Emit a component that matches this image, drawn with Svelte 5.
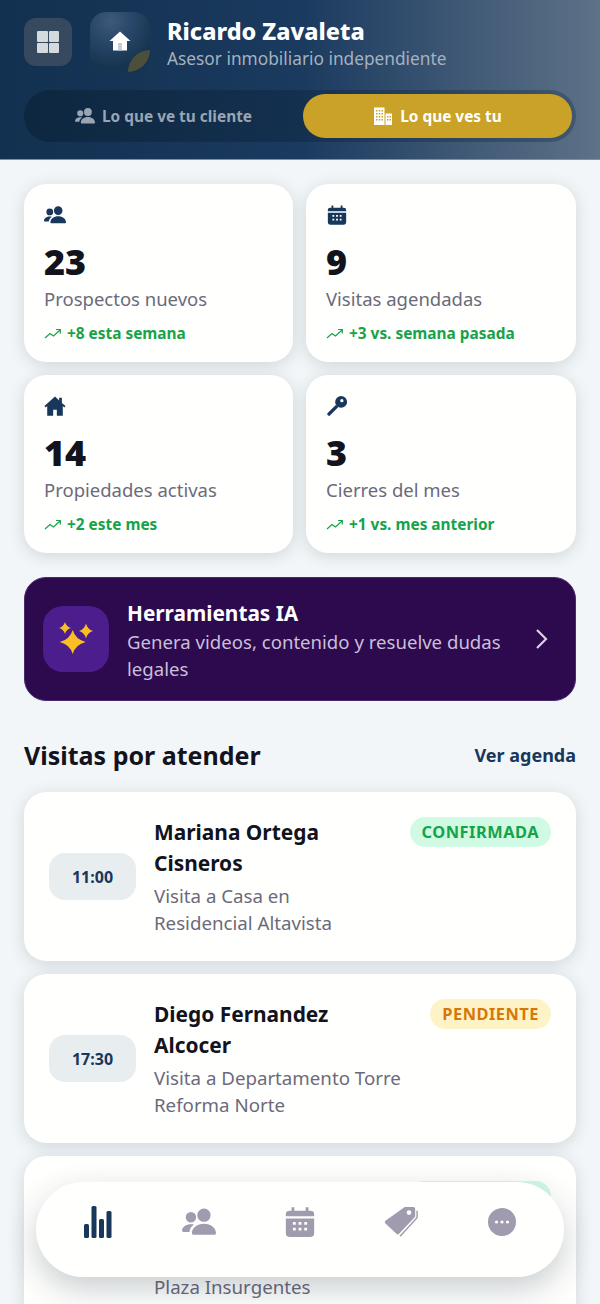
<script lang="ts">
	const people = 'M15.500 2.500a4.700 4.700 0 1 1 0 9.400 4.700 4.700 0 0 1 0-9.400zM6.300 5a3.700 3.700 0 1 1 0 7.400 3.700 3.700 0 0 1 0-7.400zM15.500 13.300c4.800 0 8.300 2.800 8.500 6.500.0.700-.4 1.200-1.100 1.200H8.100c-.7 0-1.100-.5-1.100-1.200.2-3.700 3.700-6.500 8.500-6.500zM6.300 13.500c.8 0 1.500.1 2.200.3-1.900 1.300-3.100 3.200-3.300 5.200H1c-.7 0-1-.5-1-1.100.2-2.500 2.800-4.400 6.300-4.400z';

	const stats = [
		{ icon: 'people', value: '23', label: 'Prospectos nuevos', trend: '+8 esta semana' },
		{ icon: 'calendar', value: '9', label: 'Visitas agendadas', trend: '+3 vs. semana pasada' },
		{ icon: 'home', value: '14', label: 'Propiedades activas', trend: '+2 este mes' },
		{ icon: 'key', value: '3', label: 'Cierres del mes', trend: '+1 vs. mes anterior' }
	];

	const visits = [
		{ time: '11:00', name: 'Mariana Ortega Cisneros', place: 'Visita a Casa en Residencial Altavista', status: 'CONFIRMADA', kind: 'ok' },
		{ time: '17:30', name: 'Diego Fernandez Alcocer', place: 'Visita a Departamento Torre Reforma Norte', status: 'PENDIENTE', kind: 'wait' },
		{ time: '19:00', name: 'Alejandra Mendoza Rivas', place: 'Visita a Oficina Corporativa Plaza Insurgentes', status: 'CONFIRMADA', kind: 'ok' }
	];
</script>

{#snippet calendar()}
	<path fill-rule="evenodd" d="M6 1.500h2V4h8V1.500h2V4h1.500A2.500 2.500 0 0 1 22 6.500V8H2V6.500A2.500 2.500 0 0 1 4.500 4H6zM2 9.500h20V20a2.500 2.500 0 0 1-2.500 2.500h-15A2.500 2.500 0 0 1 2 20zM7 12v2h2v-2zm4 0v2h2v-2zm4 0v2h2v-2zm-8 4v2h2v-2zm4 0v2h2v-2zm4 0v2h2v-2z" />
{/snippet}

<header class="top">
	<div class="brand-row">
		<button class="menu" aria-label="Menu">
			<span></span><span></span><span></span><span></span>
		</button>
		<div class="logo">
			<svg class="logo-house" viewBox="0 0 24 24" aria-hidden="true">
				<path fill="#fff" d="M12 2.500 1.500 12H5v9.500h14V12h3.500z" />
				<rect x="10" y="14" width="4" height="7.500" fill="#c6ccd2" />
			</svg>
			<span class="leaf"></span>
		</div>
		<div class="who">
			<h1>Ricardo Zavaleta</h1>
			<p>Asesor inmobiliario independiente</p>
		</div>
	</div>
	<div class="switch">
		<button class="seg client">
			<svg width="20" height="20" viewBox="0 0 24 24" fill="currentColor" aria-hidden="true"><path d={people} /></svg>
			Lo que ve tu cliente
		</button>
		<button class="seg active">
			<svg width="20" height="20" viewBox="0 0 20 20" aria-hidden="true">
				<path fill="#fff" fill-rule="evenodd" d="M1 1.500h10.500V19H1zM3 4v1.500h1.500V4zm2.800 0v1.500h1.500V4zM8.500 4v1.500H10V4zM3 7v1.500h1.500V7zm2.800 0v1.500h1.500V7zM8.500 7v1.500H10V7zM3 10v1.500h1.500V10zm2.800 0v1.500h1.500V10zM8.500 10v1.500H10V10zM3 13v1.500h1.500V13zm2.800 0v1.500h1.500V13zM8.500 13v1.500H10V13zM12.500 7.500H19V19h-6.500zM14 10v1.500h1.500V10zm2.500 0v1.500H18V10zM14 13v1.500h1.500V13zm2.500 0v1.500H18V13z" />
			</svg>
			Lo que ves tu
		</button>
	</div>
</header>

<main>
	<section class="stats">
		{#each stats as s}
			<article class="stat">
				<svg class="stat-icon" viewBox="0 0 24 24" fill="#17375b" aria-hidden="true">
					{#if s.icon === 'people'}
						<path d={people} />
					{:else if s.icon === 'calendar'}
						{@render calendar()}
					{:else if s.icon === 'home'}
						<path d="M12 1.500 0.500 12l1.400 1.500L3.500 12v10.500H10V16h4v6.500h6.500V12l1.600 1.500 1.400-1.500L19.500 8.800V3h-3v3z" />
					{:else}
						<path fill-rule="evenodd" d="M16.500 1a6.500 6.500 0 1 1 0 13 6.500 6.500 0 0 1 0-13zm.8 3.400a1.800 1.800 0 1 0 0 3.600 1.800 1.800 0 0 0 0-3.600z" />
						<path d="M11 10.500 13.500 13l-9 9.200a1.500 1.500 0 0 1-2.200 0l-.5-.5a1.500 1.500 0 0 1 0-2.200z" />
					{/if}
				</svg>
				<div class="value">{s.value}</div>
				<div class="label">{s.label}</div>
				<div class="trend">
					<svg width="18" height="18" viewBox="0 0 18 18" fill="none" stroke="currentColor" stroke-width="1.200" aria-hidden="true"><path d="M1 13 6 8.500 9.500 11 16 5M12 4.500h4.300V8.500" /></svg>
					{s.trend}
				</div>
			</article>
		{/each}
	</section>

	<section class="ai">
		<div class="ai-icon">
			<svg width="36" height="36" viewBox="0 0 36 36" fill="#fbbf24" aria-hidden="true">
				<path d="M14.700 9Q17.500 18.500 27.700 21 17.500 23.500 14.700 33 11.900 23.500 1.700 21 11.900 18.500 14.700 9z" />
				<path d="M7 1Q8.300 5.700 13 7 8.300 8.300 7 13 5.700 8.300 1 7 5.700 5.700 7 1z" />
				<path d="M28 2.500Q29.500 8.500 35 10 29.500 11.500 28 17.500 26.500 11.500 21 10 26.500 8.500 28 2.500z" />
			</svg>
		</div>
		<div class="ai-text">
			<h2>Herramientas IA</h2>
			<p>Genera videos, contenido y resuelve dudas legales</p>
		</div>
		<svg class="chev" width="14" height="22" viewBox="0 0 14 22" fill="none" stroke="#d9d2e4" stroke-width="2.200" aria-hidden="true"><path d="m2 2 9 9-9 9" /></svg>
	</section>

	<div class="section-head">
		<h2>Visitas por atender</h2>
		<span>Ver agenda</span>
	</div>

	<section class="visits">
		{#each visits as v}
			<article class="visit">
				<div class="time">{v.time}</div>
				<div class="visit-body">
					<h3>{v.name}</h3>
					<p>{v.place}</p>
				</div>
				<span class="badge {v.kind}">{v.status}</span>
			</article>
		{/each}
	</section>
</main>

<nav class="tabs">
	<svg class="tab" viewBox="0 0 30 34" fill="#17375b" aria-hidden="true">
		<rect x="1" y="19" width="5" height="14" rx="1.500" />
		<rect x="8.500" y="1" width="5" height="32" rx="1.500" />
		<rect x="16" y="14" width="5" height="19" rx="1.500" />
		<rect x="23.500" y="6" width="5" height="27" rx="1.500" />
	</svg>
	<svg class="tab" viewBox="0 0 24 24" fill="#a09bae" aria-hidden="true"><path d={people} /></svg>
	<svg class="tab" viewBox="0 0 24 24" fill="#a09bae" aria-hidden="true">{@render calendar()}</svg>
	<svg class="tab" viewBox="0 0 36 34" aria-hidden="true">
		<path fill="#a09bae" fill-rule="evenodd" d="M22 1h9a2 2 0 0 1 2 2v8.500L16 29.500a2 2 0 0 1-2.800 0L1.500 18.500a2 2 0 0 1 0-2.800zm4.500 3.500a2.500 2.500 0 1 0 0 5 2.500 2.500 0 0 0 0-5z" />
		<path fill="none" stroke="#a09bae" stroke-width="1.500" d="M35 5v7.500L17 32" />
	</svg>
	<svg class="tab" viewBox="-3 -3 34 34" aria-hidden="true">
		<circle cx="14" cy="14" r="14" fill="#a09bae" />
		<circle cx="8.500" cy="14" r="1.600" fill="#fff" /><circle cx="14" cy="14" r="1.600" fill="#fff" /><circle cx="19.500" cy="14" r="1.600" fill="#fff" />
	</svg>
</nav>

<style>
	:global(body) {
		background: #f2f6f8;
		font-family: 'Noto Sans', 'Open Sans', sans-serif;
		overflow: hidden;
		height: 1304px;
	}

	h1, h2, h3, p { margin: 0; }

	button {
		font: inherit;
		border: none;
		cursor: pointer;
	}

	.top {
		height: 160px;
		box-sizing: border-box;
		padding: 18px 24px 0;
		background: linear-gradient(90deg, #12304f 0%, #1a3a5f 50%, #5e7288 100%);
		border-bottom: 1px solid #7f90a3;
	}

	.brand-row {
		display: flex;
		align-items: flex-start;
		gap: 18px;
		height: 72px;
	}

	.menu {
		width: 48px;
		height: 48px;
		border-radius: 12px;
		background: #37495f;
		display: grid;
		grid-template-columns: 10.500px 10.500px;
		grid-auto-rows: 10.500px;
		gap: 1px;
		place-content: center;
		padding: 0;
	}

	.menu span {
		background: #d5dade;
		border-radius: 1px;
	}

	.logo {
		position: relative;
		width: 60px;
		height: 60px;
		margin: -6px 0 0 0;
		border-radius: 16px;
		overflow: hidden;
		background: radial-gradient(circle at 35% 15%, #3e5a79 0%, #2a486b 30%, #17344f 72%, #15314f 100%);
		display: grid;
		place-items: center;
	}

	.logo-house {
		width: 24px;
		height: 24px;
		margin: -3px 0 0 -1px;
	}

	.leaf {
		position: absolute;
		right: 0;
		bottom: 0;
		width: 22px;
		height: 22px;
		background: #4b4f3b;
		border-radius: 100% 0 100% 0;
	}

	.who {
		margin-left: -1px;
	}

	.who h1 {
		font-size: 23.400px;
		line-height: 27px;
		font-weight: 800;
		color: #fff;
	}

	.who p {
		margin-top: 1px;
		font-size: 17.300px;
		line-height: 26px;
		color: #a5b1be;
	}

	.switch {
		display: grid;
		grid-template-columns: 275px 269px;
		height: 52px;
		padding: 4px;
		box-sizing: border-box;
		border-radius: 26px;
		background: linear-gradient(90deg, #0e2740 0%, #14304f 50%, #3f5770 100%);
	}

	.seg {
		display: flex;
		align-items: center;
		justify-content: center;
		gap: 7px;
		border-radius: 22px;
		background: transparent;
		color: #98a5b3;
		font-size: 15.400px;
		font-weight: 700;
	}

	.seg.client {
		padding-right: 10px;
	}

	.seg.active {
		background: #c9a227;
		color: #fff;
	}

	main {
		padding: 24px 24px 0;
	}

	.stats {
		display: grid;
		grid-template-columns: 269px 270px;
		gap: 13px;
	}

	.stat {
		height: 178px;
		box-sizing: border-box;
		padding: 20px 20px 0;
		background: #fffffd;
		border-radius: 22px;
		box-shadow: 0 3px 16px rgba(30, 50, 70, 0.16);
	}

	.stat-icon {
		display: block;
		width: 22px;
		height: 22px;
	}

	.value {
		margin-top: 12px;
		font-size: 36px;
		line-height: 48px;
		font-weight: 900;
		color: #12131c;
	}

	.label {
		font-size: 18.500px;
		line-height: 26px;
		color: #6b6a7c;
	}

	.trend {
		display: flex;
		align-items: center;
		gap: 5px;
		margin-top: 10px;
		font-size: 15.400px;
		line-height: 24px;
		font-weight: 700;
		color: #16a34a;
	}

	.ai {
		display: flex;
		align-items: center;
		gap: 18px;
		height: 124px;
		box-sizing: border-box;
		margin-top: 24px;
		padding: 0 26px 0 18px;
		background: #2d0a4e;
		border: 1px solid #4a2a6e;
		border-radius: 22px;
	}

	.ai-icon {
		flex: none;
		width: 66px;
		height: 66px;
		border-radius: 20px;
		background: #4c1d8c;
		display: grid;
		place-items: center;
	}

	.ai-text {
		flex: 1;
		padding-top: 2px;
	}

	.ai-text h2 {
		font-size: 20.800px;
		line-height: 28px;
		font-weight: 700;
		color: #fff;
	}

	.ai-text p {
		margin-top: 1px;
		font-size: 18.600px;
		line-height: 27px;
		color: #cbbfdc;
	}

	.chev {
		flex: none;
	}

	.section-head {
		display: flex;
		align-items: center;
		justify-content: space-between;
		margin: 36px 0 19px;
		height: 36px;
	}

	.section-head h2 {
		font-size: 25px;
		font-weight: 700;
		color: #12131c;
	}

	.section-head span {
		font-size: 18px;
		font-weight: 700;
		color: #17375b;
	}

	.visits {
		display: flex;
		flex-direction: column;
		gap: 13px;
	}

	.visit {
		display: flex;
		align-items: center;
		gap: 18px;
		height: 169px;
		box-sizing: border-box;
		padding: 0 25px;
		background: #fffffd;
		border-radius: 22px;
		box-shadow: 0 3px 16px rgba(30, 50, 70, 0.16);
		flex: none;
	}

	.time {
		flex: none;
		width: 87px;
		height: 47px;
		line-height: 49px;
		text-align: center;
		border-radius: 16px;
		background: #e8edf0;
		color: #17375b;
		font-size: 16px;
		font-weight: 700;
	}

	.visit-body {
		flex: 1;
		min-width: 0;
		max-width: 250px;
		margin-right: auto;
	}

	.visit-body h3 {
		font-size: 20.900px;
		line-height: 31px;
		font-weight: 700;
		color: #12131c;
	}

	.visit-body p {
		margin-top: 3px;
		font-size: 18.700px;
		line-height: 27px;
		color: #6b6a7c;
	}

	.badge {
		flex: none;
		align-self: flex-start;
		margin-top: 25px;
		padding: 0 12px;
		height: 30px;
		line-height: 30px;
		border-radius: 15px;
		font-size: 16.400px;
		font-weight: 700;
		letter-spacing: 0.5px;
	}

	.badge.ok {
		background: #d1fae5;
		color: #16a34a;
	}

	.badge.wait {
		background: #fef3c7;
		color: #d97706;
	}

	.tabs {
		position: fixed;
		left: 36px;
		top: 1182px;
		width: 528px;
		height: 95px;
		box-sizing: border-box;
		padding: 0 45px 15px;
		display: flex;
		align-items: center;
		justify-content: space-between;
		background: #fffffd;
		border-radius: 48px;
		box-shadow: 0 12px 32px rgba(30, 50, 70, 0.24);
	}

	.tab {
		width: 34px;
		height: 34px;
	}
</style>
